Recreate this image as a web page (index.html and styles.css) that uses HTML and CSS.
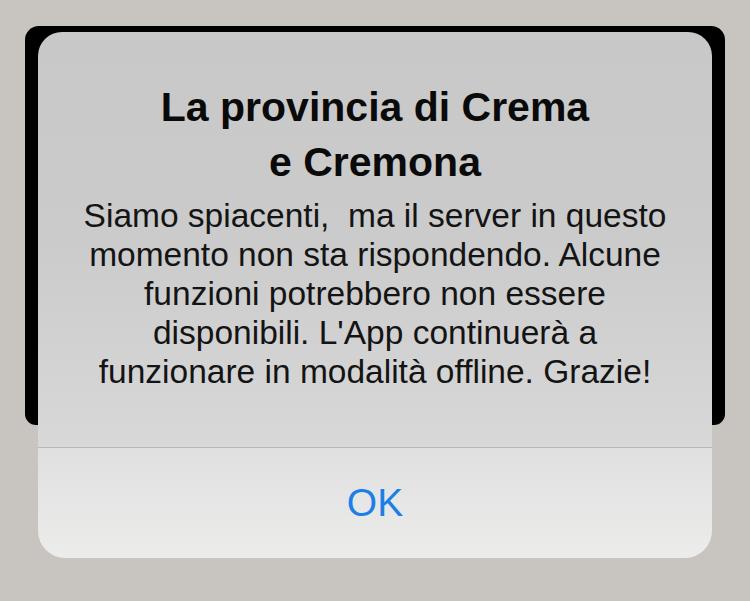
FILE: index.html
```html
<!DOCTYPE html>
<html lang="it">
<head>
<meta charset="utf-8">
<title>Alert</title>
<link rel="stylesheet" href="styles.css">
</head>
<body>
<div class="stage">
  <div class="backdrop"></div>
  <div class="alert" role="alertdialog">
    <div class="alert-body">
      <h1 class="alert-title">La provincia di Crema<br>e Cremona</h1>
      <p class="alert-message">Siamo spiacenti,&nbsp; ma il server in questo<br>momento non sta rispondendo. Alcune<br>funzioni potrebbero non essere<br>disponibili. L'App continuerà a<br>funzionare in modalità offline. Grazie!</p>
    </div>
    <div class="alert-actions">
      <button class="alert-btn" type="button">OK</button>
    </div>
  </div>
</div>
</body>
</html>
```
FILE: styles.css
```css
html, body {
  margin: 0;
  padding: 0;
}
body {
  background: #c8c4c0;
  font-family: "Liberation Sans", Arial, sans-serif;
}
.stage {
  width: 750px;
  height: 601px;
  display: grid;
  grid-template: 1fr / 1fr;
  overflow: hidden;
}
.backdrop {
  grid-area: 1 / 1;
  align-self: start;
  justify-self: start;
  margin: 26px 0 0 25px;
  width: 700px;
  height: 399px;
  background: #000;
  border-radius: 14px 14px 11px 11px;
}
.alert {
  grid-area: 1 / 1;
  align-self: start;
  justify-self: start;
  margin: 32px 0 0 38px;
  width: 674px;
  height: 526px;
  border-radius: 24px 24px 27px 27px;
  overflow: hidden;
  display: flex;
  flex-direction: column;
}
.alert-body {
  height: 416px;
  box-sizing: border-box;
  padding-top: 48px;
  background: linear-gradient(to bottom, #c8c8c8 0%, #cbcbcb 50%, #d8d8d8 100%);
  border-bottom: 1px solid #b7b7b7;
  text-align: center;
}
.alert-title {
  margin: 0;
  font-size: 41px;
  line-height: 55px;
  font-weight: 700;
  color: #0a0a0a;
}
.alert-message {
  margin: 6px 0 0;
  font-size: 33.5px;
  line-height: 39px;
  font-weight: 400;
  color: #141414;
}
.alert-actions {
  flex: 1;
  display: flex;
  background: linear-gradient(to bottom, #dfdfdf 0%, #e6e6e6 50%, #ececea 100%);
}
.alert-btn {
  flex: 1;
  border: 0;
  background: transparent;
  font-family: "Liberation Sans", Arial, sans-serif;
  font-size: 39px;
  color: #1b7fe6;
  padding: 0;
  margin: 0;
}
```
